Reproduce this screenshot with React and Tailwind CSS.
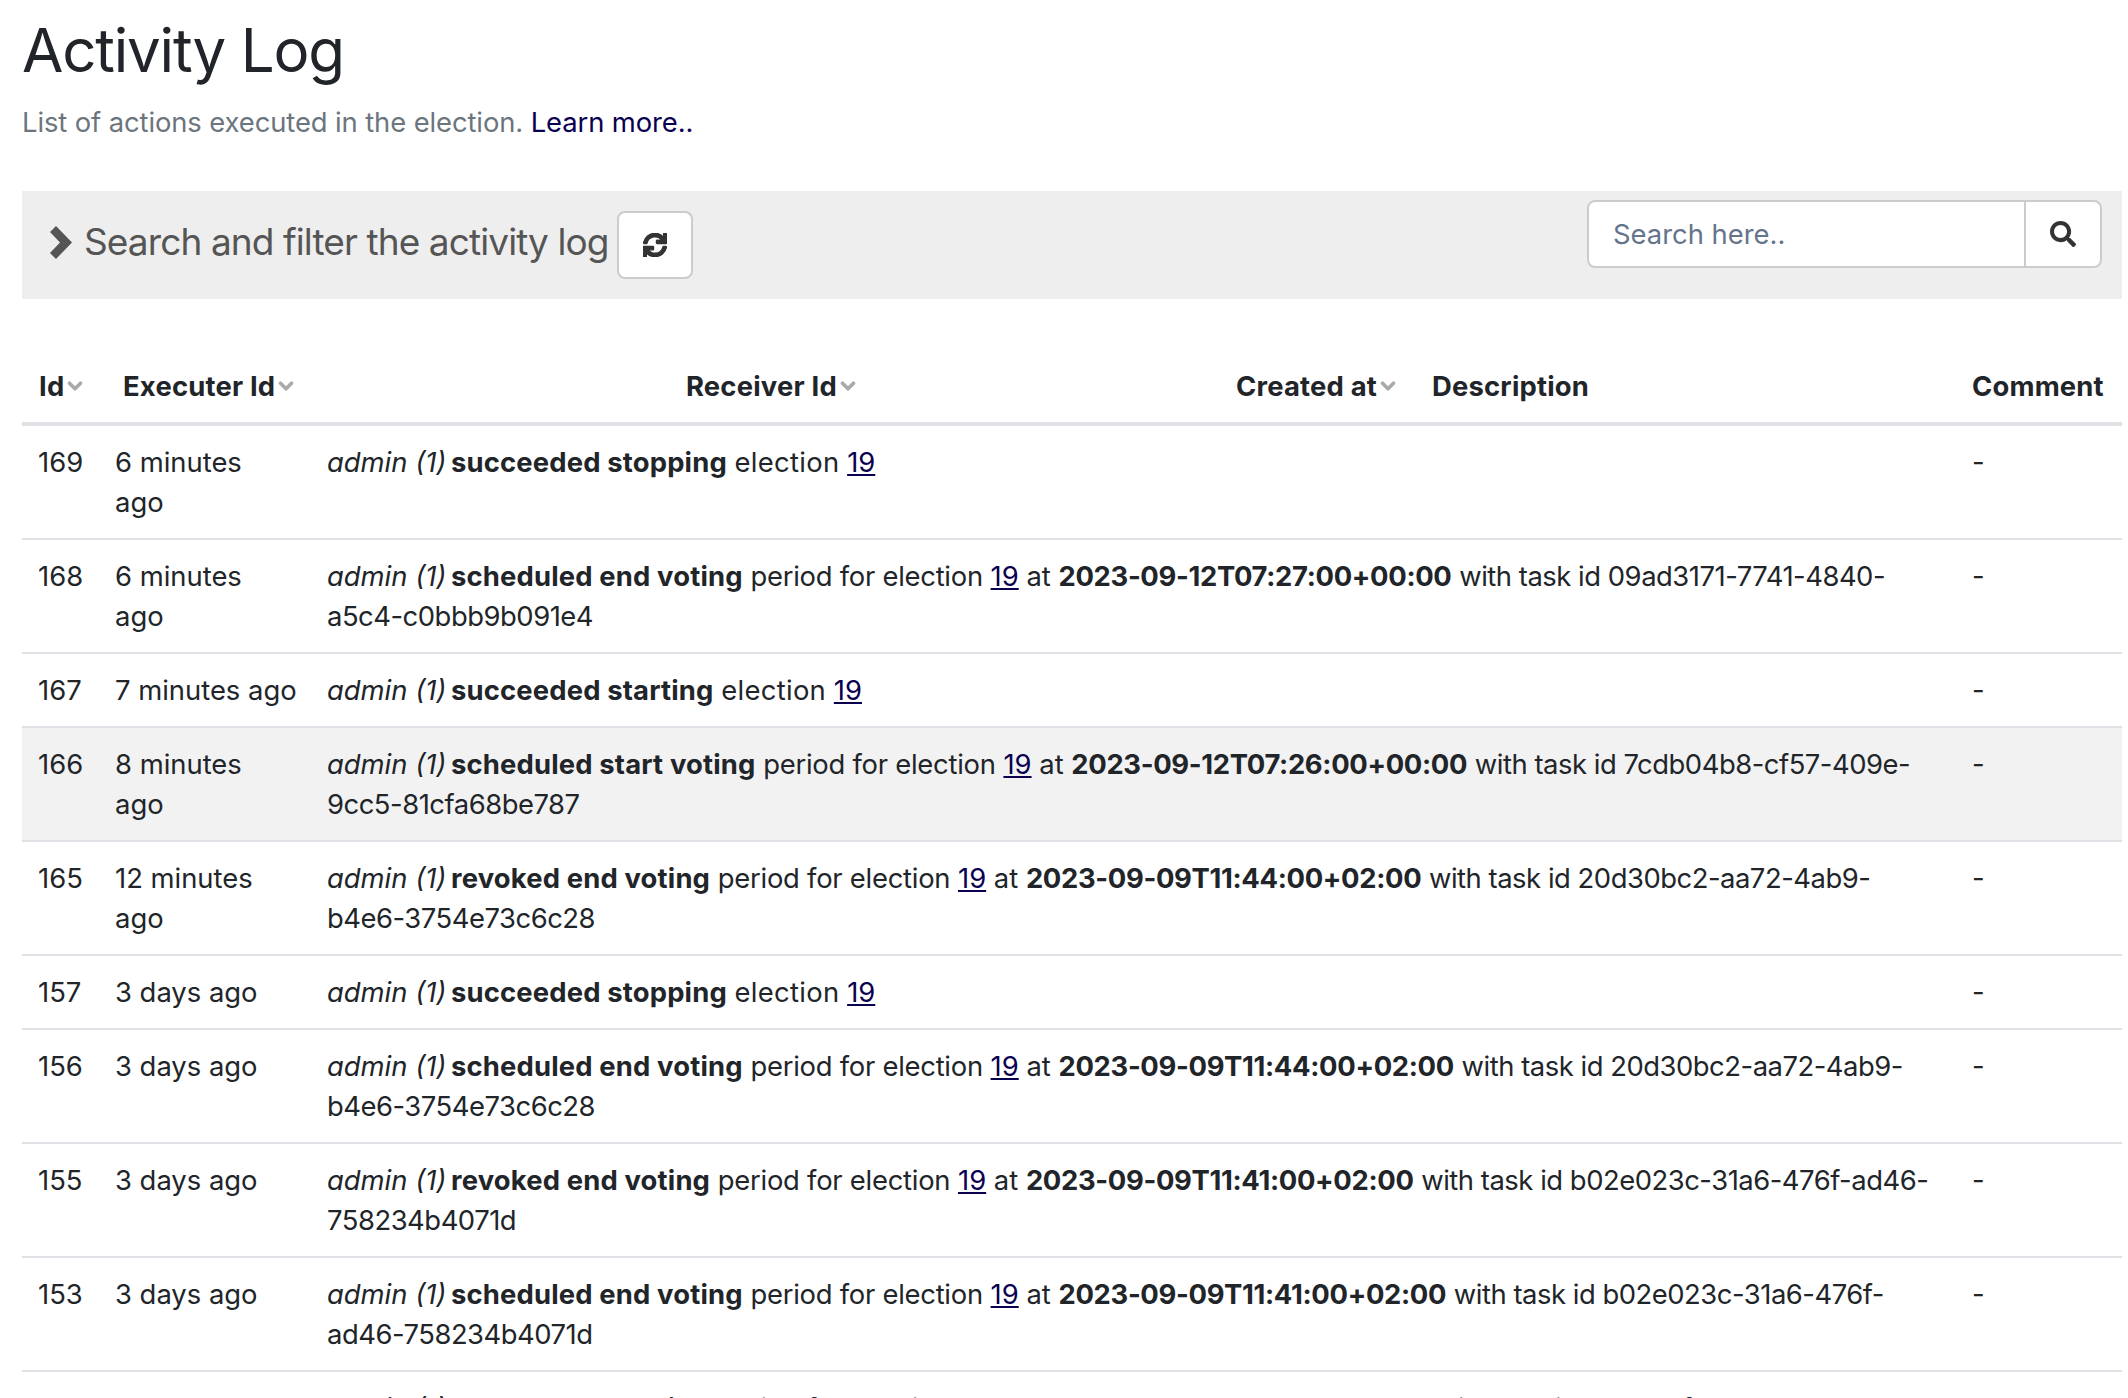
import React from 'react';
import { ChevronDown } from 'lucide-react';
import { FaSync, FaSearch } from 'react-icons/fa';

const rows = [
    { id: 169, time: ['6 minutes', 'ago'], action: 'succeeded stopping', kind: 'election' },
    { id: 168, time: ['6 minutes', 'ago'], action: 'scheduled end voting', kind: 'period', at: '2023-09-12T07:27:00+00:00', task: ['09ad3171-7741-4840-', 'a5c4-c0bbb9b091e4'] },
    { id: 167, time: ['7 minutes ago'], action: 'succeeded starting', kind: 'election' },
    { id: 166, time: ['8 minutes', 'ago'], action: 'scheduled start voting', kind: 'period', at: '2023-09-12T07:26:00+00:00', task: ['7cdb04b8-cf57-409e-', '9cc5-81cfa68be787'], hover: true },
    { id: 165, time: ['12 minutes', 'ago'], action: 'revoked end voting', kind: 'period', at: '2023-09-09T11:44:00+02:00', task: ['20d30bc2-aa72-4ab9-', 'b4e6-3754e73c6c28'] },
    { id: 157, time: ['3 days ago'], action: 'succeeded stopping', kind: 'election' },
    { id: 156, time: ['3 days ago'], action: 'scheduled end voting', kind: 'period', at: '2023-09-09T11:44:00+02:00', task: ['20d30bc2-aa72-4ab9-', 'b4e6-3754e73c6c28'] },
    { id: 155, time: ['3 days ago'], action: 'revoked end voting', kind: 'period', at: '2023-09-09T11:41:00+02:00', task: ['b02e023c-31a6-476f-ad46-', '758234b4071d'] },
    { id: 153, time: ['3 days ago'], action: 'scheduled end voting', kind: 'period', at: '2023-09-09T11:41:00+02:00', task: ['b02e023c-31a6-476f-', 'ad46-758234b4071d'] },
    { id: 152, time: ['7 days ago'], action: 'revoked end voting', kind: 'period', at: '2023-09-09T10:30:00+00:00', task: ['1112c04f-aa12-4550-a001-', '758234b4071d'] },
];

function SortHead({ children, className }) {
    return (
        <div className={`flex items-center font-bold ${className}`}>
            {children}
            <ChevronDown className="w-[22px] h-[22px] text-[#aaaaaa]" strokeWidth={4} />
        </div>
    );
}

function Row({ row }) {
    return (
        <div className={`grid grid-cols-[77px_212px_1645px_1fr] border-b-2 border-[#dee2e6] ${row.hover ? 'bg-[#f2f2f2]' : ''}`}>
            <div className="p-4">{row.id}</div>
            <div className="py-4 pl-4 pr-0">
                {row.time[0]}
                {row.time[1] && (
                    <>
                        <br />
                        {row.time[1]}
                    </>
                )}
            </div>
            <div className="p-4 pr-0 whitespace-nowrap">
                <em className="mr-[-3px]">admin (1)</em> <strong className="tracking-[0.17px]">{row.action}</strong>{' '}
                {row.kind === 'period' ? (
                    <span className="tracking-[-0.25px]">period for election</span>
                ) : (
                    <span className="tracking-[0.3px]">election</span>
                )}{' '}
                <a className="underline text-[#0a0050]">19</a>
                {row.at && (
                    <>
                        {' '}at <strong className="tracking-[-0.32px]">{row.at}</strong>{' '}
                        <span className="tracking-[-0.47px]">with task id {row.task[0]}</span>
                        <br />
                        <span className="tracking-[-0.47px]">{row.task[1]}</span>
                    </>
                )}
            </div>
            <div className="p-4">-</div>
        </div>
    );
}

export default function App() {
    return (
        <div className="h-screen overflow-hidden bg-white pl-[22px] pr-[6px] text-[27.4px] leading-[40px] text-[#212529] font-['Inter',sans-serif]">
            <h1 className="pt-[16px] text-[60px] leading-[68px] font-normal tracking-[-1.2px]">Activity Log</h1>
            <p className="mt-[18px] text-[#6c757d] tracking-[-0.1px]">
                List of actions executed in the election. <a className="text-[#0a0050]">Learn more..</a>
            </p>

            <div className="mt-[49px] h-[108px] bg-[#eeeeee] flex items-start justify-between pl-[28px] pr-[20px]">
                <div className="flex items-center mt-[20px] text-[#555555]">
                    <svg viewBox="0 0 22 33" className="w-[22px] h-[33px] mr-[12px] -mt-[6px]" fill="currentColor">
                        <polygon points="0,6 6,0 22,16.5 6,33 0,27 10,16.5" />
                    </svg>
                    <span className="text-[37px] leading-[48px] tracking-[-0.9px] -mt-[6px]">Search and filter the activity log</span>
                    <button className="ml-[8px] w-[76px] h-[68px] bg-white border-2 border-[#cccccc] rounded-lg flex items-center justify-center text-[#333333]">
                        <FaSync className="w-[24px] h-[24px]" stroke="currentColor" strokeWidth={30} />
                    </button>
                </div>
                <div className="mt-[9px] flex h-[68px] w-[515px] bg-white border-2 border-[#cccccc] rounded-lg">
                    <div className="flex-1 flex items-center pl-[24px] text-[#64748b]">Search here..</div>
                    <div className="w-[76px] border-l-2 border-[#cccccc] flex items-center justify-center text-[#333333]">
                        <FaSearch className="w-[26px] h-[26px]" />
                    </div>
                </div>
            </div>

            <div className="mt-[57px] h-[70px] flex items-center border-b-4 border-[#dee2e6] pl-[17px] pb-[6px] tracking-[0.2px]">
                <SortHead className="w-[84px]">Id</SortHead>
                <SortHead className="w-[563px]">Executer Id</SortHead>
                <SortHead className="w-[550px]">Receiver Id</SortHead>
                <SortHead className="w-[196px]">Created at</SortHead>
                <div className="w-[540px] font-bold">Description</div>
                <div className="font-bold">Comment</div>
            </div>

            {rows.map((row) => (
                <Row key={row.id} row={row} />
            ))}
        </div>
    );
}
